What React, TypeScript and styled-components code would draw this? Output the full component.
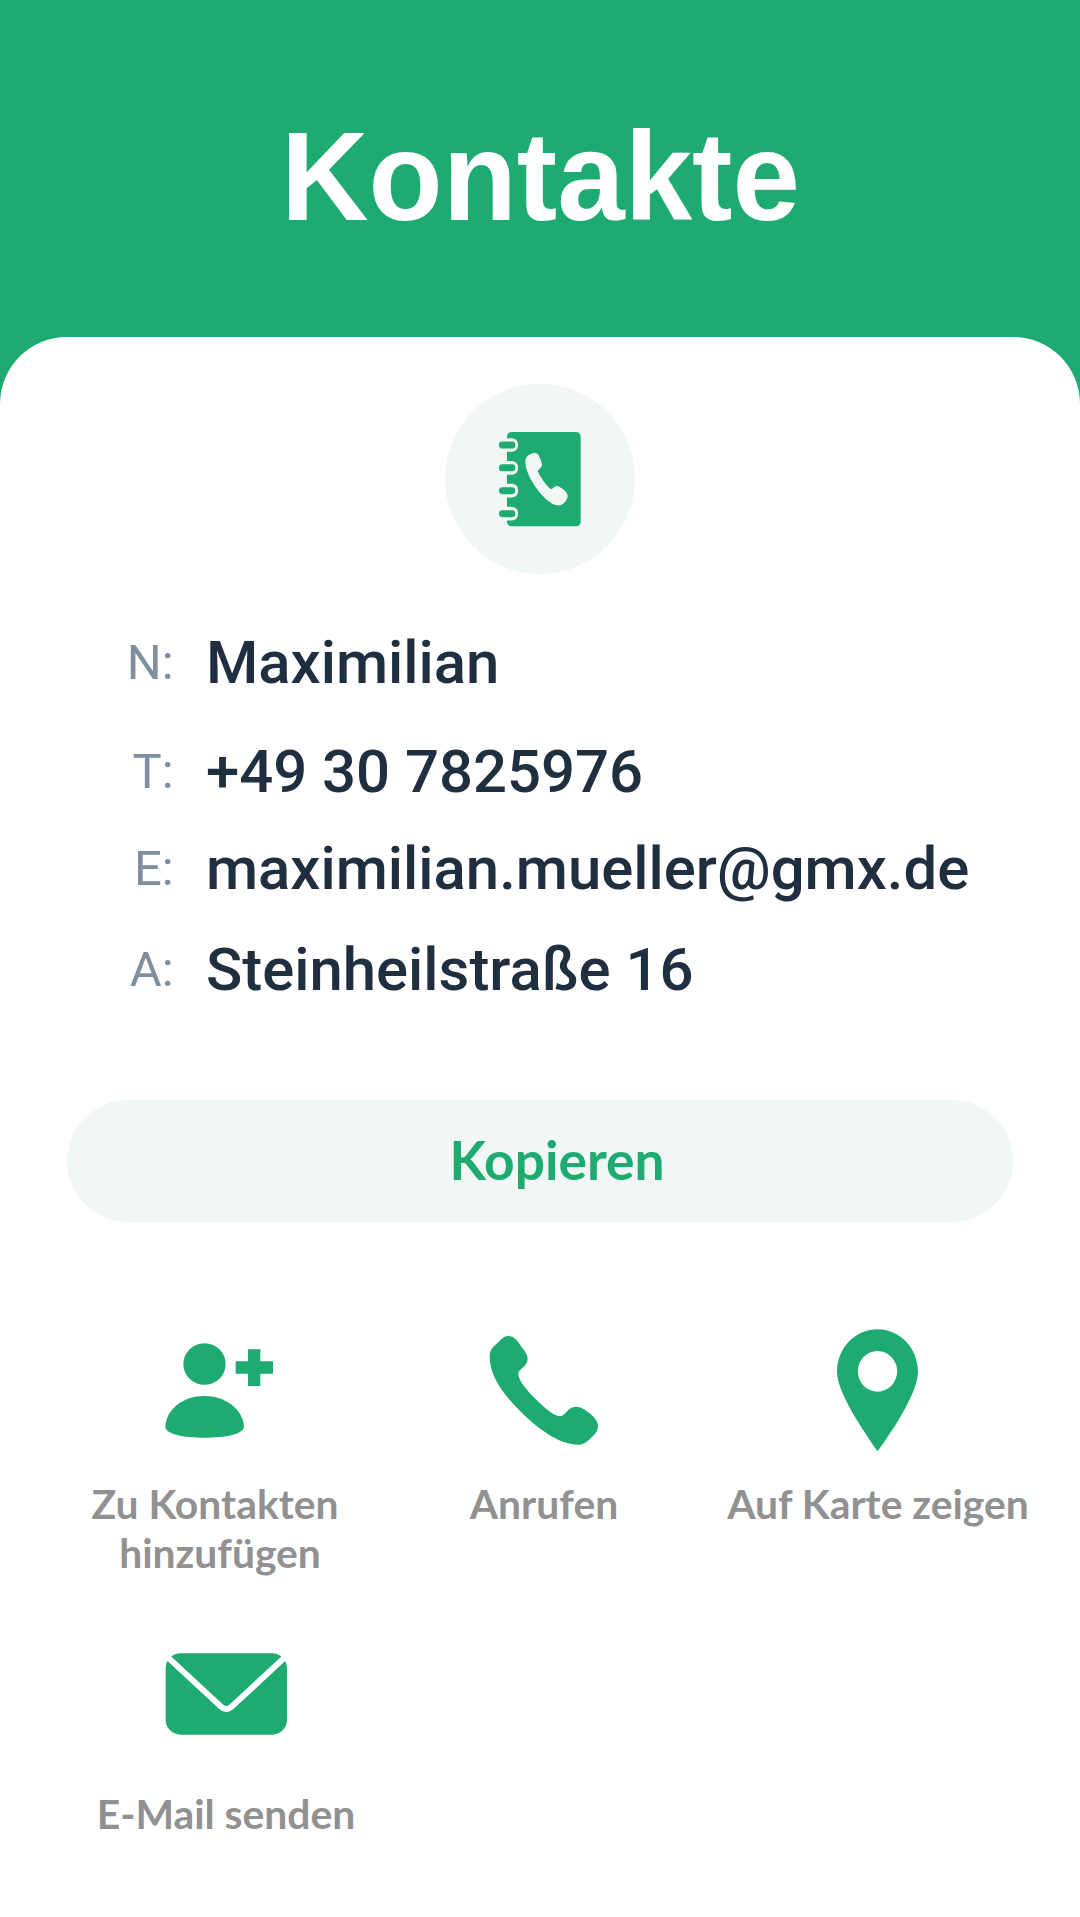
import React from 'react';
import styled, { createGlobalStyle } from 'styled-components';

const green = '#1eab72';
const mint = '#f0f7f5';

const GlobalStyle = createGlobalStyle`
  *, *::before, *::after { box-sizing: border-box; }
  body { margin: 0; background: #fff; }
`;

const Page = styled.div`
  width: 1080px;
  min-height: 1917px;
  display: flex;
  flex-direction: column;
  background: ${green};
`;

const Header = styled.header`
  height: 337px;
  padding: 108px 0 0 281px;
`;

const Title = styled.h1`
  margin: 0;
  width: max-content;
  font: 700 121.3px/140px 'Liberation Sans', Arial, sans-serif;
  color: #fff;
  transform: scaleY(1.045);
  transform-origin: 0 115px;
`;

const Card = styled.main`
  flex: 1;
  display: flex;
  flex-direction: column;
  padding-top: 47px;
  background: #fff;
  border-radius: 67px 67px 0 0;
`;

const Avatar = styled.div`
  align-self: center;
  width: 190px;
  height: 190px;
  border-radius: 50%;
  background: ${mint};

  svg { display: block; }
`;

const Details = styled.dl`
  margin: 54px 0 0;
`;

const DetailRow = styled.div<{ $after?: number }>`
  display: grid;
  grid-template-columns: 173.6px 1fr;
  column-gap: 32.4px;
  align-items: center;
  height: 70px;
  margin-bottom: ${({ $after = 0 }) => $after}px;
`;

const Term = styled.dt`
  font: 400 49px/70px Roboto, sans-serif;
  color: #7f8fa0;
  text-align: right;
`;

const Value = styled.dd`
  margin: 0;
  font: 500 59.85px/70px Roboto, sans-serif;
  color: #202f40;
  white-space: nowrap;
`;

const CopyButton = styled.button`
  align-self: center;
  width: 946px;
  height: 122px;
  margin-top: 95px;
  padding: 0 0 4px 34px;
  border: 0;
  border-radius: 61px;
  background: ${mint};
  color: ${green};
  font: 700 53.3px/64px Lato, sans-serif;
`;

const Actions = styled.nav`
  display: grid;
  grid-template-columns: 320px 328px 340px;
  row-gap: 52px;
  padding-left: 60px;
  margin-top: 97px;
`;

const Action = styled.a<{ $indent?: number }>`
  display: flex;
  flex-direction: column;
  align-items: center;
  padding-left: ${({ $indent = 0 }) => $indent}px;
`;

const Icon = styled.svg`
  width: 160px;
  height: 140px;
  fill: ${green};
`;

const Label = styled.span`
  margin-top: 20px;
  font: 700 40.8px/49px Lato, sans-serif;
  color: #919191;
  text-align: center;
  white-space: pre;
`;

const details = [
  { term: 'N:', value: 'Maximilian', after: 39 },
  { term: 'T:', value: '+49 30 7825976', after: 27 },
  { term: 'E:', value: 'maximilian.mueller@gmx.de', after: 31 },
  { term: 'A:', value: 'Steinheilstraße 16', after: 0 },
];

const ContactBook = () => (
  <svg width="190" height="190" viewBox="45 42 570 570" fill={green}>
    <rect x="231" y="186" width="221" height="283" rx="14" />
    {[225, 293.5, 362, 431].map((y) => (
      <g key={y}>
        <rect x="216" y={y - 20.5} width="48" height="41" rx="18" fill={mint} />
        <rect x="207" y={y - 10.5} width="49" height="21" rx="10" />
      </g>
    ))}
    <path
      fill={mint}
      d="M312 249C302 250 286 258 286 275C286 305 310 345 335 374C350 390 368 406 386 406C401 406 413 388 413 377C413 366 391 349 380 348C371 348 370 358 362 357C351 350 330 320 323 304C324 298 336 293 336 284C335 275 330 264 326 256C323 250 318 249 312 249Z"
    />
  </svg>
);

const AddPersonIcon = () => (
  <Icon viewBox="0 27 480 420">
    <ellipse cx="193.5" cy="162" rx="63.5" ry="62.5" />
    <path d="M76 350C78 298 130 258 193 258C256 258 309 298 312 350C312 372 256 383 193 383C130 383 76 372 76 350Z" />
    <path d="M324 118H361V154H399V191H361V228H324V191H287V154H324Z" />
  </Icon>
);

const PhoneIcon = () => (
  <Icon viewBox="-18 27 480 420">
    <path d="M115 78C101 78 94 89 82 99C72 109 59 117 59 140C59 196 98 250 145 298C200 354 265 404 325 404C345 404 351 394 362 385C373 374 384 365 384 348C384 335 374 323 362 312C346 300 334 290 318 290C302 290 294 301 284 311C277 319 268 320 254 314C229 300 205 275 185 255C165 234 150 215 145 195C143 186 149 182 157 174C167 165 173 158 173 146C173 133 163 121 152 107C142 92 133 78 115 78Z" />
  </Icon>
);

const PinIcon = () => (
  <Icon viewBox="-36 27 480 420">
    <path d="M202.5 58C136 58 81 114 81 185C81 240 140 332 199 419Q202.5 425 206 419C265 338 324 240 324 185C324 114 269 58 202.5 58Z" />
    <ellipse cx="202.5" cy="184" rx="59" ry="61" fill="#fff" />
  </Icon>
);

const MailIcon = () => (
  <Icon viewBox="18 -3 480 420">
    <rect x="77" y="70" width="364" height="244" rx="45" />
    <path d="M78 77L243 230Q259 245 275 230L440 77" fill="none" stroke="#fff" strokeWidth="18" />
  </Icon>
);

const actions = [
  { label: 'Zu Kontakten\u00a0\nhinzufügen', Glyph: AddPersonIcon },
  { label: 'Anrufen', Glyph: PhoneIcon },
  { label: 'Auf Karte zeigen', Glyph: PinIcon },
  { label: 'E-Mail senden', Glyph: MailIcon, indent: 12 },
];

export default function App() {
  return (
    <>
      <GlobalStyle />
      <Page>
        <Header>
          <Title>Kontakte</Title>
        </Header>
        <Card>
          <Avatar>
            <ContactBook />
          </Avatar>
          <Details>
            {details.map(({ term, value, after }) => (
              <DetailRow key={term} $after={after}>
                <Term>{term}</Term>
                <Value>{value}</Value>
              </DetailRow>
            ))}
          </Details>
          <CopyButton type="button">Kopieren</CopyButton>
          <Actions>
            {actions.map(({ label, Glyph, indent }) => (
              <Action key={label} $indent={indent}>
                <Glyph />
                <Label>{label}</Label>
              </Action>
            ))}
          </Actions>
        </Card>
      </Page>
    </>
  );
}
